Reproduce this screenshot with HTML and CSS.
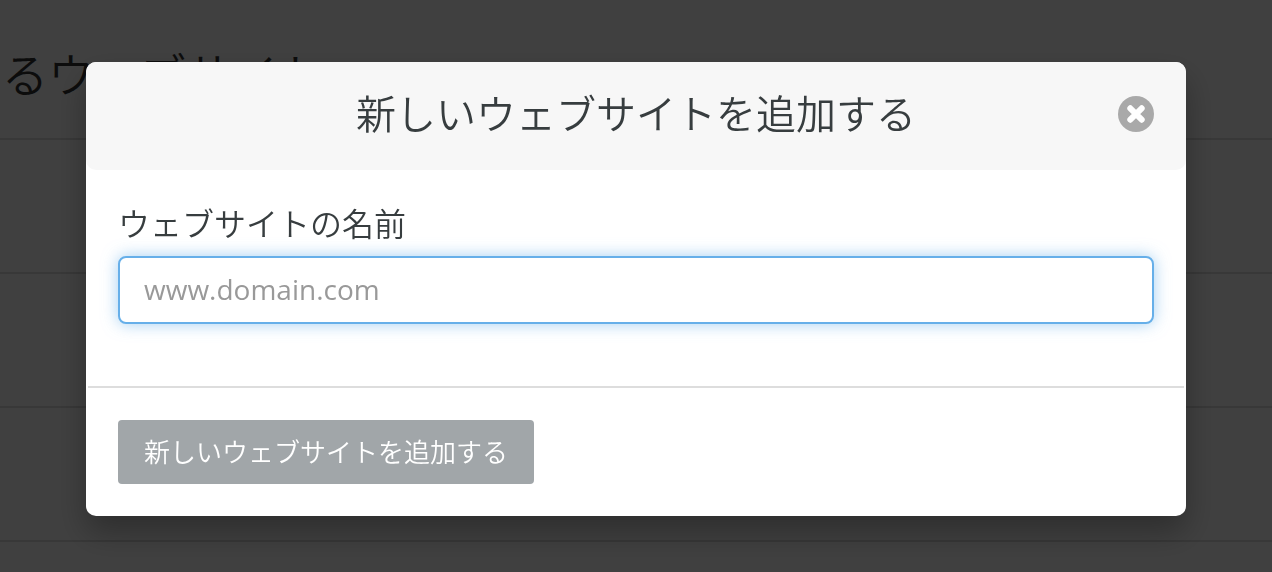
FILE: index.html
```
<!DOCTYPE html>
<html lang="ja">
<head>
    <meta charset="UTF-8">
    <meta name="viewport" content="width=device-width, initial-scale=1.0">
    <title>新しいウェブサイトを追加する</title>
    <link rel="stylesheet" href="styles.css">
</head>
<body>
    <main class="page">
        <h1 class="page-title">るウェブサイト</h1>
        <ul class="site-list">
            <li class="site-row"></li>
            <li class="site-row"></li>
            <li class="site-row"></li>
            <li class="site-row"></li>
        </ul>
    </main>

    <div class="overlay">
        <form class="modal" role="dialog" aria-modal="true" aria-labelledby="modal-title">
            <header class="modal-header">
                <h2 class="modal-title" id="modal-title">新しいウェブサイトを追加する</h2>
                <button class="close-btn" type="button" aria-label="閉じる">
                    <svg width="36" height="36" viewBox="0 0 36 36" aria-hidden="true">
                        <circle cx="18" cy="18" r="18" fill="#a9a9a9"/>
                        <path d="M12.3 12.3L23.7 23.7M23.7 12.3L12.3 23.7" stroke="#fff" stroke-width="6" stroke-linecap="round"/>
                    </svg>
                </button>
            </header>
            <div class="modal-body">
                <label class="field-label" for="site-name">ウェブサイトの名前</label>
                <input class="field-input" type="text" id="site-name" placeholder="www.domain.com">
            </div>
            <footer class="modal-footer">
                <button class="submit-btn" type="submit">新しいウェブサイトを追加する</button>
            </footer>
        </form>
    </div>
</body>
</html>
```
FILE: styles.css
```
* {
    margin: 0;
    padding: 0;
    box-sizing: border-box;
}

body {
    background: #fff;
    color: #373d3f;
    font-family: "Open Sans", "Noto Sans CJK JP", sans-serif;
}

/* Page behind the dialog */
.page-title {
    padding: 42px 2px 32px;
    font-size: 46px;
    font-weight: 350;
    line-height: 64px;
    color: #333;
}

.site-list {
    list-style: none;
}

.site-row {
    height: 134px;
    border-top: 2px solid #ddd;
}

.site-row:last-child {
    height: 32px;
}

.overlay {
    position: fixed;
    inset: 0;
    background: rgba(0, 0, 0, 0.75);
    display: flex;
    justify-content: center;
    align-items: flex-start;
    padding: 62px 32px;
}

/* Dialog */
.modal {
    width: 100%;
    max-width: 1100px;
    background: #fff;
    border-radius: 10px;
    box-shadow: 0 16px 32px rgba(0, 0, 0, 0.3);
}

.modal-header {
    display: grid;
    grid-template-columns: 36px 1fr 36px;
    align-items: center;
    padding: 22px 32px 26px;
    background: #f7f7f7;
    border-radius: 10px;
}

.modal-title {
    grid-column: 2;
    font-size: 40px;
    font-weight: 350;
    line-height: 60px;
    text-align: center;
}

.close-btn {
    width: 36px;
    height: 36px;
    border: none;
    background: none;
    cursor: pointer;
}

.close-btn svg {
    display: block;
}

.modal-body {
    padding: 32px 32px 62px;
}

.field-label {
    display: block;
    margin-bottom: 10px;
    font-size: 32px;
    font-weight: 350;
    line-height: 44px;
}

.field-input {
    display: block;
    width: 100%;
    height: 68px;
    padding: 0 24px 2px;
    border: 2px solid #66afe9;
    border-radius: 8px;
    box-shadow: 0 0 16px rgba(102, 175, 233, 0.6);
    font-family: inherit;
    font-size: 28px;
    color: #373d3f;
    outline: none;
}

.field-input::placeholder {
    color: #999;
}

.modal-footer {
    margin: 0 2px;
    padding: 32px 30px;
    border-top: 2px solid #ddd;
}

.submit-btn {
    display: block;
    height: 64px;
    padding: 0 26px 2px;
    border: none;
    border-radius: 4px;
    background: #a1a6a9;
    color: #fff;
    font-family: inherit;
    font-size: 26px;
    font-weight: 350;
    cursor: pointer;
}
```
